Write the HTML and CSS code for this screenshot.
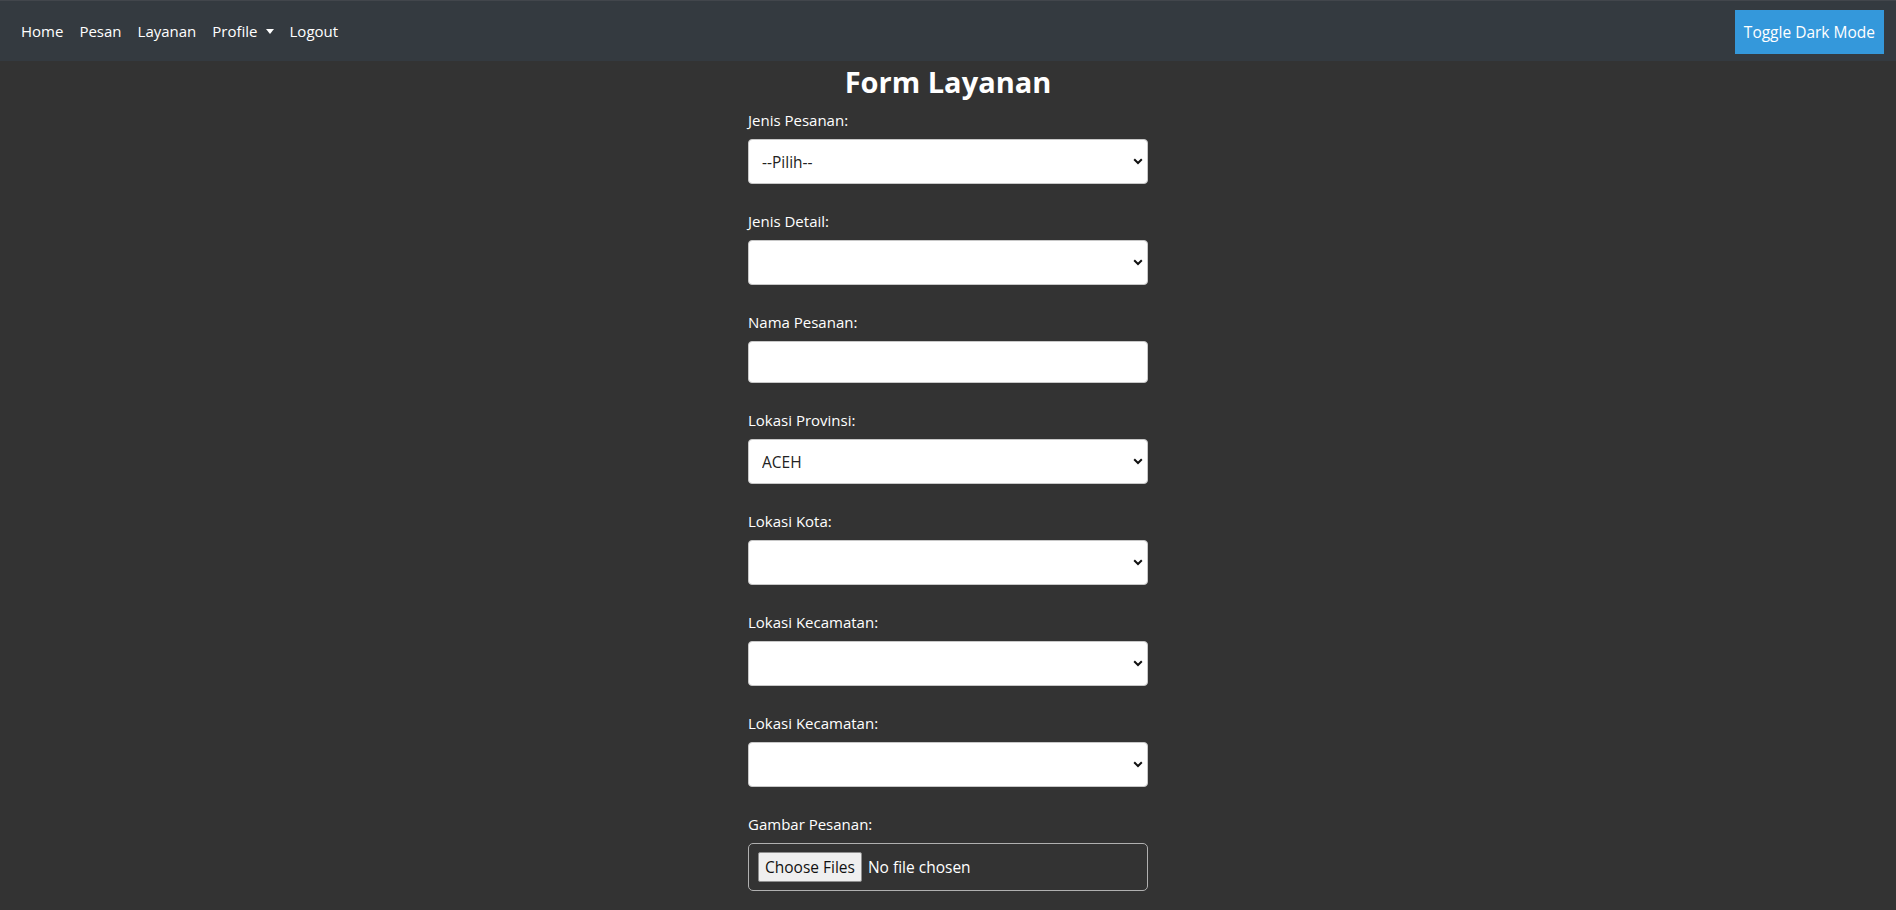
FILE: index.html
```html
<!DOCTYPE html>
<html lang="id">
<head>
<meta charset="utf-8">
<title>Form Layanan</title>
<link rel="stylesheet" href="styles.css">
</head>
<body>
<nav class="navbar">
  <ul class="nav-links">
    <li><a href="#" class="nav-link">Home</a></li>
    <li><a href="#" class="nav-link">Pesan</a></li>
    <li><a href="#" class="nav-link">Layanan</a></li>
    <li><a href="#" class="nav-link dropdown">Profile <span class="caret"></span></a></li>
    <li><a href="#" class="nav-link">Logout</a></li>
  </ul>
  <button class="toggle-btn" type="button">Toggle Dark Mode</button>
</nav>
<main class="container">
  <h2 class="title">Form Layanan</h2>
  <form class="form">
    <div class="form-group">
      <label class="form-label">Jenis Pesanan:</label>
      <div class="select-wrap">
        <select class="form-select"><option>--Pilih--</option></select>
        <svg class="chev" width="10" height="7" viewBox="0 0 10 7"><path d="M1.2 1.3 L5 5 L8.8 1.3" fill="none" stroke="#111" stroke-width="2"/></svg>
      </div>
    </div>
    <div class="form-group">
      <label class="form-label">Jenis Detail:</label>
      <div class="select-wrap">
        <select class="form-select"><option></option></select>
        <svg class="chev" width="10" height="7" viewBox="0 0 10 7"><path d="M1.2 1.3 L5 5 L8.8 1.3" fill="none" stroke="#111" stroke-width="2"/></svg>
      </div>
    </div>
    <div class="form-group">
      <label class="form-label">Nama Pesanan:</label>
      <input class="form-input" type="text">
    </div>
    <div class="form-group">
      <label class="form-label">Lokasi Provinsi:</label>
      <div class="select-wrap">
        <select class="form-select"><option>ACEH</option></select>
        <svg class="chev" width="10" height="7" viewBox="0 0 10 7"><path d="M1.2 1.3 L5 5 L8.8 1.3" fill="none" stroke="#111" stroke-width="2"/></svg>
      </div>
    </div>
    <div class="form-group">
      <label class="form-label">Lokasi Kota:</label>
      <div class="select-wrap">
        <select class="form-select"><option></option></select>
        <svg class="chev" width="10" height="7" viewBox="0 0 10 7"><path d="M1.2 1.3 L5 5 L8.8 1.3" fill="none" stroke="#111" stroke-width="2"/></svg>
      </div>
    </div>
    <div class="form-group">
      <label class="form-label">Lokasi Kecamatan:</label>
      <div class="select-wrap">
        <select class="form-select"><option></option></select>
        <svg class="chev" width="10" height="7" viewBox="0 0 10 7"><path d="M1.2 1.3 L5 5 L8.8 1.3" fill="none" stroke="#111" stroke-width="2"/></svg>
      </div>
    </div>
    <div class="form-group">
      <label class="form-label">Lokasi Kecamatan:</label>
      <div class="select-wrap">
        <select class="form-select"><option></option></select>
        <svg class="chev" width="10" height="7" viewBox="0 0 10 7"><path d="M1.2 1.3 L5 5 L8.8 1.3" fill="none" stroke="#111" stroke-width="2"/></svg>
      </div>
    </div>
    <div class="form-group">
      <label class="form-label">Gambar Pesanan:</label>
      <div class="file-box">
        <span class="file-btn">Choose Files</span>
        <span class="file-text">No file chosen</span>
      </div>
    </div>
  </form>
</main>
</body>
</html>
```
FILE: styles.css
```css
* { box-sizing: border-box; }
html, body { margin: 0; padding: 0; }
body {
  background: #333333;
  color: #ffffff;
  font-family: "Open Sans", "Noto Sans", sans-serif;
  font-size: 16px;
  overflow: hidden;
}
.navbar {
  height: 61px;
  background: #343a40;
  border-top: 1px solid #42464c;
  display: flex;
  align-items: center;
  justify-content: space-between;
  padding: 0 12px 0 13px;
}
.nav-links {
  list-style: none;
  margin: 0;
  padding: 0;
  display: flex;
  align-items: center;
}
.nav-link {
  display: flex;
  align-items: center;
  padding: 8px 8px;
  color: #ffffff;
  text-decoration: none;
  font-size: 15px;
  line-height: 24px;
}
.caret {
  display: inline-block;
  margin-left: 8px;
  width: 0;
  height: 0;
  border-left: 4px solid transparent;
  border-right: 4px solid transparent;
  border-top: 5px solid #ffffff;
}
.toggle-btn {
  background: #3498db;
  color: #ffffff;
  border: none;
  border-radius: 0;
  font-family: inherit;
  font-size: 15.5px;
  line-height: 24px;
  height: 44px;
  padding: 0 9px;
  margin-top: 1px;
}
.container {
  width: 400px;
  margin: 0 auto;
}
.title {
  text-align: center;
  font-size: 29px;
  font-weight: 700;
  line-height: 38px;
  margin: 2px 0 7px;
}
.form-group {
  display: flex;
  flex-direction: column;
  margin-bottom: 25px;
}
.form-label {
  font-size: 15px;
  line-height: 24px;
  margin-bottom: 7px;
}
.select-wrap {
  position: relative;
}
.form-select {
  width: 100%;
  height: 45px;
  appearance: none;
  -webkit-appearance: none;
  background: #ffffff;
  border: 1px solid #c8c8c8;
  border-radius: 4px;
  padding: 0 13px;
  font-family: inherit;
  font-size: 15.5px;
  color: #222222;
}
.chev {
  position: absolute;
  right: 5px;
  top: 19px;
  pointer-events: none;
}
.form-input {
  width: 100%;
  height: 42px;
  background: #ffffff;
  border: 1px solid #c8c8c8;
  border-radius: 4px;
  padding: 0 13px;
  font-family: inherit;
  font-size: 15px;
}
.file-box {
  height: 48px;
  border: 1px solid #b0b0b0;
  border-radius: 5px;
  padding: 0 9px;
  display: flex;
  align-items: center;
  gap: 6px;
}
.file-btn {
  display: inline-block;
  background: #efefef;
  color: #111111;
  border: 1px solid #8f8f8f;
  border-radius: 2px;
  padding: 0 6px;
  height: 30px;
  line-height: 28px;
  font-size: 15.5px;
}
.file-text {
  font-size: 15.5px;
  color: #ffffff;
}
```
